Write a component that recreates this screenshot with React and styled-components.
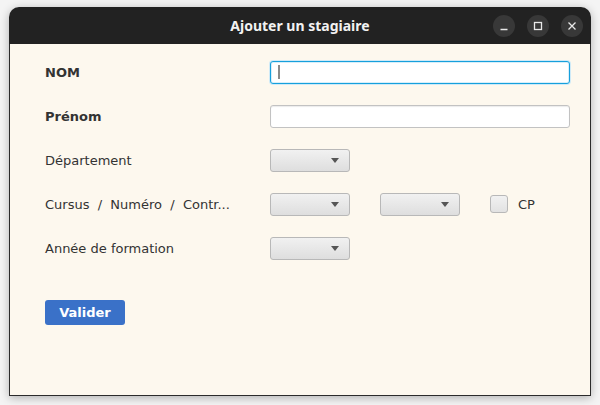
import React from "react";
import styled, { createGlobalStyle } from "styled-components";

const GlobalStyle = createGlobalStyle`
  html, body {
    margin: 0;
    padding: 0;
    background: #f4f4f4;
  }
  body {
    font-family: "DejaVu Sans", "Liberation Sans", sans-serif;
  }
`;

const Desktop = styled.div`
  width: 600px;
  height: 405px;
  padding: 7px 9px 0;
  box-sizing: border-box;
  overflow: hidden;
`;

const Window = styled.div`
  width: 582px;
  height: 389px;
  display: flex;
  flex-direction: column;
  border-radius: 10px 10px 0 0;
  box-shadow: 0 2px 10px rgba(0, 0, 0, 0.28);
  overflow: hidden;
`;

const TitleBar = styled.div`
  height: 37px;
  flex: none;
  background: #222222;
  display: flex;
  align-items: center;
  justify-content: center;
  position: relative;
`;

const Title = styled.div`
  color: #f2f2f2;
  font-family: "Noto Sans", "DejaVu Sans", sans-serif;
  font-weight: 700;
  font-size: 14px;
`;

const Controls = styled.div`
  position: absolute;
  right: 8px;
  top: 8px;
  display: flex;
  gap: 12px;
`;

const WinButton = styled.div`
  width: 22px;
  height: 22px;
  border-radius: 50%;
  background: #383838;
  display: flex;
  align-items: center;
  justify-content: center;
`;

const Body = styled.div`
  flex: 1;
  background: #fdf8ee;
  border: 1px solid #2b2b2b;
  border-top: none;
  padding: 6px 0 0 35px;
  color: #333333;
  font-size: 13px;
`;

const Row = styled.div`
  height: 44px;
  display: grid;
  grid-template-columns: 225px auto;
  align-items: center;
`;

const Label = styled.div`
  font-weight: ${({ bold }) => (bold ? 700 : 400)};
  white-space: pre;
`;

const Controlset = styled.div`
  display: flex;
  align-items: center;
`;

const TextField = styled.div`
  width: 300px;
  height: 23px;
  box-sizing: border-box;
  background: #ffffff;
  border-radius: 3px;
  border: 1px solid ${({ focused }) => (focused ? "#16a0dc" : "#c2c2c2")};
  box-shadow: ${({ focused }) =>
    focused ? "0 0 0 1px #cfeaf7, inset 0 0 0 1px #d8eef9" : "inset 0 1px 1px #ececec"};
  display: flex;
  align-items: center;
  padding-left: 7px;
`;

const Caret = styled.div`
  width: 1px;
  height: 14px;
  background: #8a8a8a;
  border-left: 1px solid #8a8a8a;
`;

const Combo = styled.div`
  width: 80px;
  height: 23px;
  box-sizing: border-box;
  border: 1px solid #b8b8b8;
  border-radius: 3px;
  background: linear-gradient(#f1f1f1, #dedede);
  display: flex;
  align-items: center;
  justify-content: flex-end;
  padding-right: 10px;
  margin-right: ${({ gap }) => gap || 0}px;
`;

const Arrow = styled.div`
  width: 0;
  height: 0;
  border-left: 4px solid transparent;
  border-right: 4px solid transparent;
  border-top: 5px solid #555555;
`;

const CheckBox = styled.div`
  width: 18px;
  height: 18px;
  box-sizing: border-box;
  border: 1px solid #b8b8b8;
  border-radius: 3px;
  background: linear-gradient(#f1f1f1, #e2e2e2);
  margin-right: 10px;
`;

const Submit = styled.div`
  margin-top: 30px;
  width: 80px;
  height: 25px;
  border-radius: 3px;
  background: #3a71c8;
  color: #ffffff;
  font-weight: 700;
  font-size: 13px;
  display: flex;
  align-items: center;
  justify-content: center;
`;

const Icon = ({ kind }) => (
  <svg width="12" height="12" viewBox="0 0 12 12" fill="none" stroke="#e8e8e8" strokeWidth="1.3">
    {kind === "min" && <path d="M2.5 9.5h7" />}
    {kind === "max" && <rect x="2.5" y="2.5" width="7" height="7" />}
    {kind === "close" && <path d="M2.5 2.5l7 7M9.5 2.5l-7 7" />}
  </svg>
);

export default function App() {
  return (
    <Desktop>
      <GlobalStyle />
      <Window>
        <TitleBar>
          <Title>Ajouter un stagiaire</Title>
          <Controls>
            <WinButton>
              <Icon kind="min" />
            </WinButton>
            <WinButton>
              <Icon kind="max" />
            </WinButton>
            <WinButton>
              <Icon kind="close" />
            </WinButton>
          </Controls>
        </TitleBar>
        <Body>
          <Row>
            <Label bold>NOM</Label>
            <TextField focused>
              <Caret />
            </TextField>
          </Row>
          <Row>
            <Label bold>Prénom</Label>
            <TextField />
          </Row>
          <Row>
            <Label>Département</Label>
            <Controlset>
              <Combo>
                <Arrow />
              </Combo>
            </Controlset>
          </Row>
          <Row>
            <Label>{"Cursus  /  Numéro  /  Contr..."}</Label>
            <Controlset>
              <Combo gap={30}>
                <Arrow />
              </Combo>
              <Combo gap={30}>
                <Arrow />
              </Combo>
              <CheckBox />
              <span>CP</span>
            </Controlset>
          </Row>
          <Row>
            <Label>Année de formation</Label>
            <Controlset>
              <Combo>
                <Arrow />
              </Combo>
            </Controlset>
          </Row>
          <Submit>Valider</Submit>
        </Body>
      </Window>
    </Desktop>
  );
}
